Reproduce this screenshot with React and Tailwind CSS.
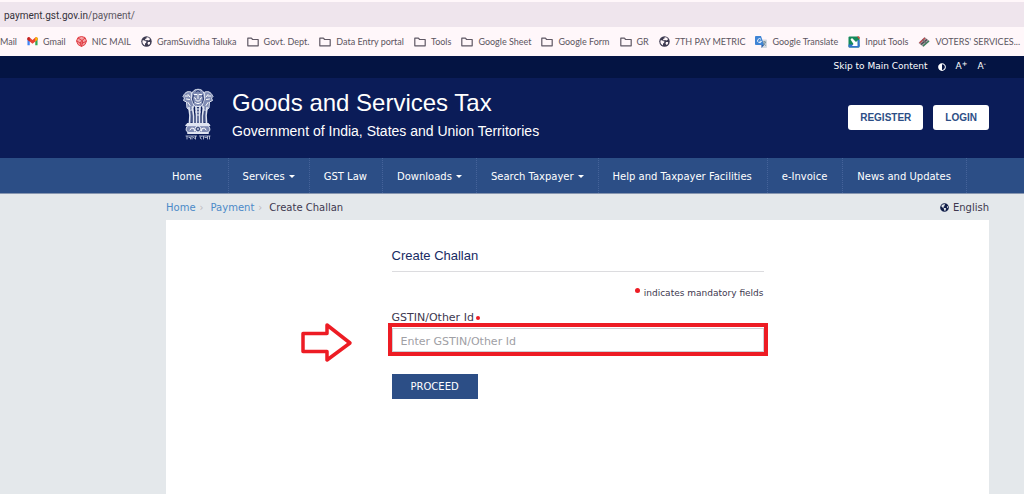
import { FaGlobeAmericas, FaAdjust } from 'react-icons/fa';

const bookmarks = [
  { label: 'Mail' },
  { label: 'Gmail', icon: GmailIcon },
  { label: 'NIC MAIL', icon: NicIcon },
  { label: 'GramSuvidha Taluka', icon: GlobeIcon },
  { label: 'Govt. Dept.', icon: FolderIcon },
  { label: 'Data Entry portal', icon: FolderIcon },
  { label: 'Tools', icon: FolderIcon },
  { label: 'Google Sheet', icon: FolderIcon },
  { label: 'Google Form', icon: FolderIcon },
  { label: 'GR', icon: FolderIcon },
  { label: '7TH PAY METRIC', icon: GlobeIcon },
  { label: 'Google Translate', icon: TranslateIcon },
  { label: 'Input Tools', icon: InputToolsIcon },
  { label: "VOTERS' SERVICES...", icon: VotersIcon },
];

const navItems = [
  { label: 'Home', wide: true },
  { label: 'Services', menu: true },
  { label: 'GST Law' },
  { label: 'Downloads', menu: true },
  { label: 'Search Taxpayer', menu: true },
  { label: 'Help and Taxpayer Facilities' },
  { label: 'e-Invoice' },
  { label: 'News and Updates' },
];

function FolderIcon() {
  return (
    <svg width="12" height="12" viewBox="0 0 12 12" fill="none" stroke="#5f5864" strokeWidth="1.2" strokeLinejoin="round">
      <path d="M0.8 2.2h3.6l1.2 1.3h5.6v6.3H0.8z" />
    </svg>
  );
}

function GlobeIcon() {
  return (
    <svg width="11" height="11" viewBox="0 0 22 22">
      <circle cx="11" cy="11" r="10.5" fill="#3d3a50" />
      <path d="M3 9c2-1 4-1 5 1l3 1-1 3-2 1v4C4 17 2 13 3 9z" fill="#fff7fa" />
      <path d="M11 3c3-1 6 1 7 4l-3 2-3-1-3 1-1-3 3-1z" fill="#fff7fa" />
      <path d="M14 12l4 0c1 3-1 5-3 6l-2-3z" fill="#fff7fa" />
    </svg>
  );
}

function GmailIcon() {
  return (
    <svg width="11" height="11" viewBox="0 0 24 24">
      <path d="M1 4v16h5V9z" fill="#4285f4" />
      <path d="M23 4v16h-5V9z" fill="#34a853" />
      <path d="M1 5.5C1 3 4 2 6 3.5l6 5 6-5C20 2 23 3 23 5.5V8l-11 9L1 8z" fill="#ea4335" />
      <path d="M18 8.5V4c2-2 5-1 5 1.500V8l-5 4z" fill="#fbbc04" />
      <path d="M1 8V5.500C1 3 4 2 6 4v8z" fill="#c5221f" />
    </svg>
  );
}

function NicIcon() {
  return (
    <svg width="11" height="11" viewBox="0 0 22 22" fill="none" stroke="#e03c42" strokeWidth="2">
      <path d="M11 1l7 2 3 7-3 7-7 4-7-4-3-7 3-7z" fill="#f4a3a6" />
      <path d="M2 10l6 4 3 7M4 4l8 5 6-5M20 11l-7 3-2 6M8 14l4-5 2 5z" />
    </svg>
  );
}

function TranslateIcon() {
  return (
    <svg width="12" height="12" viewBox="0 0 24 24">
      <path d="M9 7h13c1 0 2 1 2 2v13c0 1-1 2-2 2h-9z" fill="#d3d8e0" />
      <path d="M2 0h10l6 18H2c-1 0-2-1-2-2V2C0 1 1 0 2 0z" fill="#3f84d5" />
      <path d="M12 6.500a4 4 0 1 0 1 4H9" fill="none" stroke="#fff" strokeWidth="1.800" />
      <path d="M15 12h7M18.500 10v2M21 12c-1 4-3 5-5 7M17 14c1 3 3 4 5 5" fill="none" stroke="#607d8b" strokeWidth="1.500" />
      <path d="M13 24v-6h5z" fill="#285aa8" />
    </svg>
  );
}

function InputToolsIcon() {
  return (
    <svg width="12" height="12" viewBox="0 0 24 24">
      <rect x="1" y="1" width="22" height="22" rx="2" fill="#158a5b" />
      <path d="M1 17h22v4a2 2 0 0 1-2 2H3a2 2 0 0 1-2-2z" fill="#3373d1" />
      <path d="M18 1h3a2 2 0 0 1 2 2v4z" fill="#ee4238" />
      <path d="M19 8h4v12h-4z" fill="#3373d1" />
      <path d="M5 7l3-3 8 8 3-3v11H8l3-4z" fill="#fff" />
    </svg>
  );
}

function VotersIcon() {
  return (
    <svg width="12" height="12" viewBox="0 0 24 24" fill="none" strokeWidth="3">
      <path d="M1 14L13 2l10 8-12 12z" fill="#a4a0a5" />
      <path d="M3 14L14 4" stroke="#c0474d" />
      <path d="M6 17L18 7" stroke="#4d4a50" />
      <path d="M10 20L22 10" stroke="#39845c" />
      <path d="M8 7l10 8" stroke="#6b666d" strokeWidth="2" />
    </svg>
  );
}

function Caret() {
  return (
    <svg width="6" height="3" viewBox="0 0 6 3" fill="currentColor">
      <path d="M0 0h6L3 3z" />
    </svg>
  );
}

function Emblem() {
  return (
    <svg width="32" height="52" viewBox="0 0 64 104" fill="none" stroke="#dfe4f1" strokeWidth="2" strokeLinecap="round" role="img" aria-label="Emblem of India">
      {/* manes and heads */}
      <path d="M22 7c4-6 16-6 20 0l4 8-2 14-6 8H26l-6-8-2-14z" fill="#7f8bb3" />
      <path d="M18 8C9 5 5 11 2 17l3 3-2 5 6 3 1 12 8 6 6-10-5-14z" fill="#7f8bb3" />
      <path d="M46 8c9-3 13 3 16 9l-3 3 2 5-6 3-1 12-8 6-6-10 5-14z" fill="#7f8bb3" />
      <path d="M25 13h5M34 13h5M32 15v6M27 24c3 3 7 3 10 0M26 29c4 3 8 3 12 0M24 19l4 3M40 19l-4 3" stroke="#fff" />
      <path d="M6 16h6M9 22l6 1M12 13l4 5M58 16h-6M55 22l-6 1M52 13l-4 5M12 29l4 6M52 29l-4 6" stroke="#fff" />
      <path d="M23 15l-2 7 2 8M41 15l2 7-2 8M28 8l4-3 4 3" stroke="#0b1c58" strokeWidth="1.500" />
      {/* legs */}
      <path d="M14 39l2 16-1 16M21 38l2 18v15M28 37l1 18v16M36 37l-1 18v16M43 38l-2 18v15M50 39l-2 16 1 16" strokeWidth="3.500" />
      <path d="M18 44v24M32 40v26M46 44v24" stroke="#7f8bb3" />
      <path d="M28 42h8M27 48h10M29 54h6" />
      {/* abacus with the wheel */}
      <path d="M11 71h42l3 4H8z" fill="#dfe4f1" />
      <path d="M11 76c-5 6-3 12 3 13h36c6-1 8-7 3-13z" fill="#7f8bb3" />
      <circle cx="32" cy="82" r="6" fill="#0b1c58" />
      <path d="M32 77v10M27 82h10M28.500 78.500l7 7M35.500 78.500l-7 7" strokeWidth="1" />
      <path d="M16 84l3-4 5 1 1 5M48 84l-3-4-5 1-1 5" stroke="#fff" />
      <path d="M12 90h40" strokeWidth="4" />
      {/* motto */}
      <path d="M8 96h21M35 96h21" strokeWidth="1.500" />
      <path d="M10 97v5M14 99h3v3M20 97v5M23 99l3 2M27 97v5M38 97l-2 3 3 2M43 97v5M46 99h3M51 97v5M55 97v5" strokeWidth="1.500" />
    </svg>
  );
}

function BrowserBar() {
  return (
    <div className="bg-[#fff7fa] pt-[2px] text-[#5b5560]">
      <div className="flex h-[25px] items-center bg-[#efe5ed] pt-[2px] pl-1 font-[Roboto,sans-serif] text-[10px]">
        <span className="text-[#35313a]">payment.gst.gov.in</span>
        <span>/payment/</span>
      </div>
      <div className="flex h-[29px] items-center gap-[10px] overflow-hidden font-[Lato,sans-serif] text-[9px] whitespace-nowrap">
        {bookmarks.map(({ label, icon: Icon }) => (
          <a key={label} href="#" className="flex shrink-0 items-center gap-[5px]">
            {Icon && <Icon />}
            {label}
          </a>
        ))}
      </div>
    </div>
  );
}

function Header() {
  return (
    <header className="text-white">
      <div className="flex h-[22px] items-center justify-end gap-[10px] bg-[#041443] pr-[38px] text-[9px]">
        <a href="#main">Skip to Main Content</a>
        <button type="button" aria-label="Toggle contrast"><FaAdjust size={8} /></button>
        <button type="button">A<sup>+</sup></button>
        <button type="button">A<sup>-</sup></button>
      </div>
      <div className="flex h-20 items-center bg-[#0b1c58] pr-[35px] pb-1 pl-[182px]">
        <a href="#" className="mr-[18px] mb-1"><Emblem /></a>
        <div className="font-['Liberation_Sans',sans-serif]">
          <h1 className="text-[24px] leading-[30px]">Goods and Services Tax</h1>
          <p className="text-[14px] leading-[26px]">Government of India, States and Union Territories</p>
        </div>
        <div className="mt-[2px] ml-auto flex gap-[10px] font-['Liberation_Sans',sans-serif] text-[10px] font-bold text-[#2c4e86]">
          <button type="button" className="h-[25px] rounded-[3px] bg-white px-3">REGISTER</button>
          <button type="button" className="h-[25px] rounded-[3px] bg-white px-3">LOGIN</button>
        </div>
      </div>
    </header>
  );
}

function navPadding(item) {
  if (item.wide) return 'pr-[26px]';
  return item.menu ? 'pr-[14px]' : 'pr-[15px]';
}

function MainNav() {
  return (
    <nav className="flex h-9 border-b border-[#8796b0] bg-[#2c4e86] pl-[158px] text-[10px] whitespace-nowrap text-white">
      {navItems.map(item => (
        <a
          key={item.label}
          href="#"
          className={`flex items-center gap-1 border-r border-dotted border-[#45639a] pt-px pl-[14px] ${navPadding(item)}`}
        >
          {item.label}
          {item.menu && <Caret />}
        </a>
      ))}
    </nav>
  );
}

function ChallanForm() {
  return (
    <form className="mx-auto w-[372px] pt-[26px]" onSubmit={e => e.preventDefault()}>
      <h2 className="border-b border-[#dcdcdf] pb-[5px] font-['Liberation_Sans',sans-serif] text-[13px] leading-5 text-[#172b63]">
        Create Challan
      </h2>
      <p className="flex justify-end gap-1 pt-[14px] text-[9px] leading-[14px]">
        <span className="mt-[2px] size-[5px] rounded-full bg-[#ed1c24]" />
        indicates mandatory fields
      </p>
      <label htmlFor="gstin" className="mt-[11px] flex items-center gap-[2px] text-[11px] leading-[14px]">
        GSTIN/Other Id
        <span className="size-1 rounded-full bg-[#ed1c24]" />
      </label>
      <div className="relative mt-[3px]">
        <input
          id="gstin"
          type="text"
          placeholder="Enter GSTIN/Other Id"
          className="block h-6 w-full border border-[#cfcfd4] bg-white px-2 pt-[2px] text-[11px] placeholder:text-[#a0a0a5]"
        />
        <div className="pointer-events-none absolute -inset-x-1 -top-[5px] -bottom-1 border-4 border-[#ed1c24]" />
        <svg className="absolute right-full top-[-6px] mr-[39px]" width="53" height="42" viewBox="0 0 53 42" fill="none" stroke="#ed1c24" strokeWidth="3.5" strokeLinejoin="round">
          <path d="M3 11.5h24V3l23 18-23 17V29.500H3z" />
        </svg>
      </div>
      <button type="submit" className="mt-[22px] block h-[25px] bg-[#2c4e86] px-[19px] text-[10px] text-white">
        PROCEED
      </button>
    </form>
  );
}

export default function App() {
  return (
    <div className="flex min-h-screen flex-col bg-[#e4e8eb] font-['DejaVu_Sans',sans-serif] text-[#40384f]">
      <BrowserBar />
      <Header />
      <MainNav />
      <div className="flex flex-1 flex-col pr-[35px] pl-[166px]">
        <div className="flex h-[26px] items-center justify-between text-[10px]">
          <ol className="flex items-center">
            <li><a href="#" className="text-[#4c8ac8]">Home</a></li>
            <li className="mr-[7px] ml-1 text-[#bdb7be]">›</li>
            <li><a href="#" className="text-[#4c8ac8]">Payment</a></li>
            <li className="mr-[7px] ml-1 text-[#bdb7be]">›</li>
            <li>Create Challan</li>
          </ol>
          <button type="button" className="flex items-center gap-1">
            <FaGlobeAmericas size={9} color="#101d48" />
            English
          </button>
        </div>
        <main id="main" className="flex-1 bg-white">
          <ChallanForm />
        </main>
      </div>
    </div>
  );
}
